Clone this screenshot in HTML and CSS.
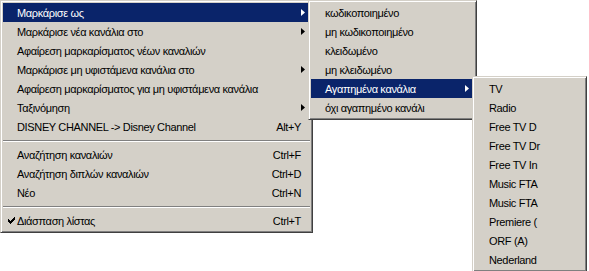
FILE: index.html
```html
<!DOCTYPE html>
<html lang="el">
<head>
<meta charset="utf-8">
<title>Menu</title>
<link rel="stylesheet" href="styles.css">
</head>
<body>
<div class="screen">
  <div class="menu main">
    <div class="item sel"><span class="chk"></span><span class="lbl">Μαρκάρισε ως</span><span class="key"></span><span class="arr"><svg width="4" height="7" viewBox="0 0 4 7"><path d="M0 0L4 3.5L0 7Z"/></svg></span></div>
    <div class="item"><span class="chk"></span><span class="lbl">Μαρκάρισε νέα κανάλια στο</span><span class="key"></span><span class="arr"><svg width="4" height="7" viewBox="0 0 4 7"><path d="M0 0L4 3.5L0 7Z"/></svg></span></div>
    <div class="item"><span class="chk"></span><span class="lbl">Αφαίρεση μαρκαρίσματος νέων καναλιών</span><span class="key"></span><span class="arr"></span></div>
    <div class="item"><span class="chk"></span><span class="lbl">Μαρκάρισε μη υφιστάμενα κανάλια στο</span><span class="key"></span><span class="arr"><svg width="4" height="7" viewBox="0 0 4 7"><path d="M0 0L4 3.5L0 7Z"/></svg></span></div>
    <div class="item"><span class="chk"></span><span class="lbl">Αφαίρεση μαρκαρίσματος για μη υφιστάμενα κανάλια</span><span class="key"></span><span class="arr"></span></div>
    <div class="item"><span class="chk"></span><span class="lbl">Ταξινόμηση</span><span class="key"></span><span class="arr"><svg width="4" height="7" viewBox="0 0 4 7"><path d="M0 0L4 3.5L0 7Z"/></svg></span></div>
    <div class="item"><span class="chk"></span><span class="lbl">DISNEY CHANNEL -&gt; Disney Channel</span><span class="key">Alt+Y</span><span class="arr"></span></div>
    <div class="sep"></div>
    <div class="item"><span class="chk"></span><span class="lbl">Αναζήτηση καναλιών</span><span class="key">Ctrl+F</span><span class="arr"></span></div>
    <div class="item"><span class="chk"></span><span class="lbl">Αναζήτηση διπλών καναλιών</span><span class="key">Ctrl+D</span><span class="arr"></span></div>
    <div class="item"><span class="chk"></span><span class="lbl">Νέο</span><span class="key">Ctrl+N</span><span class="arr"></span></div>
    <div class="sep"></div>
    <div class="item"><span class="chk"><svg width="7" height="7" viewBox="0 0 7 7" shape-rendering="crispEdges"><path d="M0 2h1v3H0z M1 3h1v3H1z M2 4h1v3H2z M3 3h1v3H3z M4 2h1v3H4z M5 1h1v3H5z M6 0h1v3H6z"/></svg></span><span class="lbl">Διάσπαση λίστας</span><span class="key">Ctrl+T</span><span class="arr"></span></div>
  </div>

  <div class="menu sub sub1">
    <div class="item"><span class="chk"></span><span class="lbl">κωδικοποιημένο</span><span class="key"></span><span class="arr"></span></div>
    <div class="item"><span class="chk"></span><span class="lbl">μη κωδικοποιημένο</span><span class="key"></span><span class="arr"></span></div>
    <div class="item"><span class="chk"></span><span class="lbl">κλειδωμένο</span><span class="key"></span><span class="arr"></span></div>
    <div class="item"><span class="chk"></span><span class="lbl">μη κλειδωμένο</span><span class="key"></span><span class="arr"></span></div>
    <div class="item sel"><span class="chk"></span><span class="lbl">Αγαπημένα κανάλια</span><span class="key"></span><span class="arr"><svg width="4" height="7" viewBox="0 0 4 7"><path d="M0 0L4 3.5L0 7Z"/></svg></span></div>
    <div class="item"><span class="chk"></span><span class="lbl">όχι αγαπημένο κανάλι</span><span class="key"></span><span class="arr"></span></div>
  </div>

  <div class="menu sub sub2">
    <div class="item"><span class="chk"></span><span class="lbl">TV</span><span class="key"></span><span class="arr"></span></div>
    <div class="item"><span class="chk"></span><span class="lbl">Radio</span><span class="key"></span><span class="arr"></span></div>
    <div class="item"><span class="chk"></span><span class="lbl">Free TV D</span><span class="key"></span><span class="arr"></span></div>
    <div class="item"><span class="chk"></span><span class="lbl">Free TV Dr</span><span class="key"></span><span class="arr"></span></div>
    <div class="item"><span class="chk"></span><span class="lbl">Free TV In</span><span class="key"></span><span class="arr"></span></div>
    <div class="item"><span class="chk"></span><span class="lbl">Music FTA</span><span class="key"></span><span class="arr"></span></div>
    <div class="item"><span class="chk"></span><span class="lbl">Music FTA</span><span class="key"></span><span class="arr"></span></div>
    <div class="item"><span class="chk"></span><span class="lbl">Premiere (</span><span class="key"></span><span class="arr"></span></div>
    <div class="item"><span class="chk"></span><span class="lbl">ORF (A)</span><span class="key"></span><span class="arr"></span></div>
    <div class="item"><span class="chk"></span><span class="lbl">Nederland</span><span class="key"></span><span class="arr"></span></div>
  </div>
</div>
</body>
</html>
```

FILE: styles.css
```css
html, body {
  margin: 0;
  background: #ffffff;
}

body {
  font-family: "Liberation Sans", Arial, sans-serif;
  font-size: 11px;
  letter-spacing: -0.35px;
  color: #000000;
}

.screen {
  position: relative;
  width: 589px;
  height: 271px;
  overflow: hidden;
}

.menu {
  box-sizing: border-box;
  background: #d4d0c8;
  border: 1px solid;
  border-color: #d4d0c8 #404040 #404040 #d4d0c8;
  box-shadow: inset 1px 1px #ffffff, inset -1px -1px #808080;
  padding: 2px;
}

.main {
  width: 313px;
}

.sub {
  position: absolute;
}

.sub1 {
  left: 308px;
  top: 0;
  width: 169px;
}

.sub2 {
  left: 472px;
  top: 76px;
  width: 115px;
}

.item {
  display: grid;
  grid-template-columns: 14px 1fr auto 9px;
  align-items: center;
  height: 19px;
  white-space: nowrap;
  color: #000000;
}

.item.sel {
  background: #0a246a;
  color: #ffffff;
}

.chk {
  display: flex;
  align-items: center;
  padding-left: 5px;
}

.chk svg,
.arr svg {
  display: block;
  fill: currentColor;
}

.key {
  padding-left: 20px;
}

.sep {
  box-sizing: border-box;
  height: 9px;
  padding-top: 4px;
}

.sep::before {
  content: "";
  display: block;
  border-top: 1px solid #808080;
  border-bottom: 1px solid #ffffff;
}
```
